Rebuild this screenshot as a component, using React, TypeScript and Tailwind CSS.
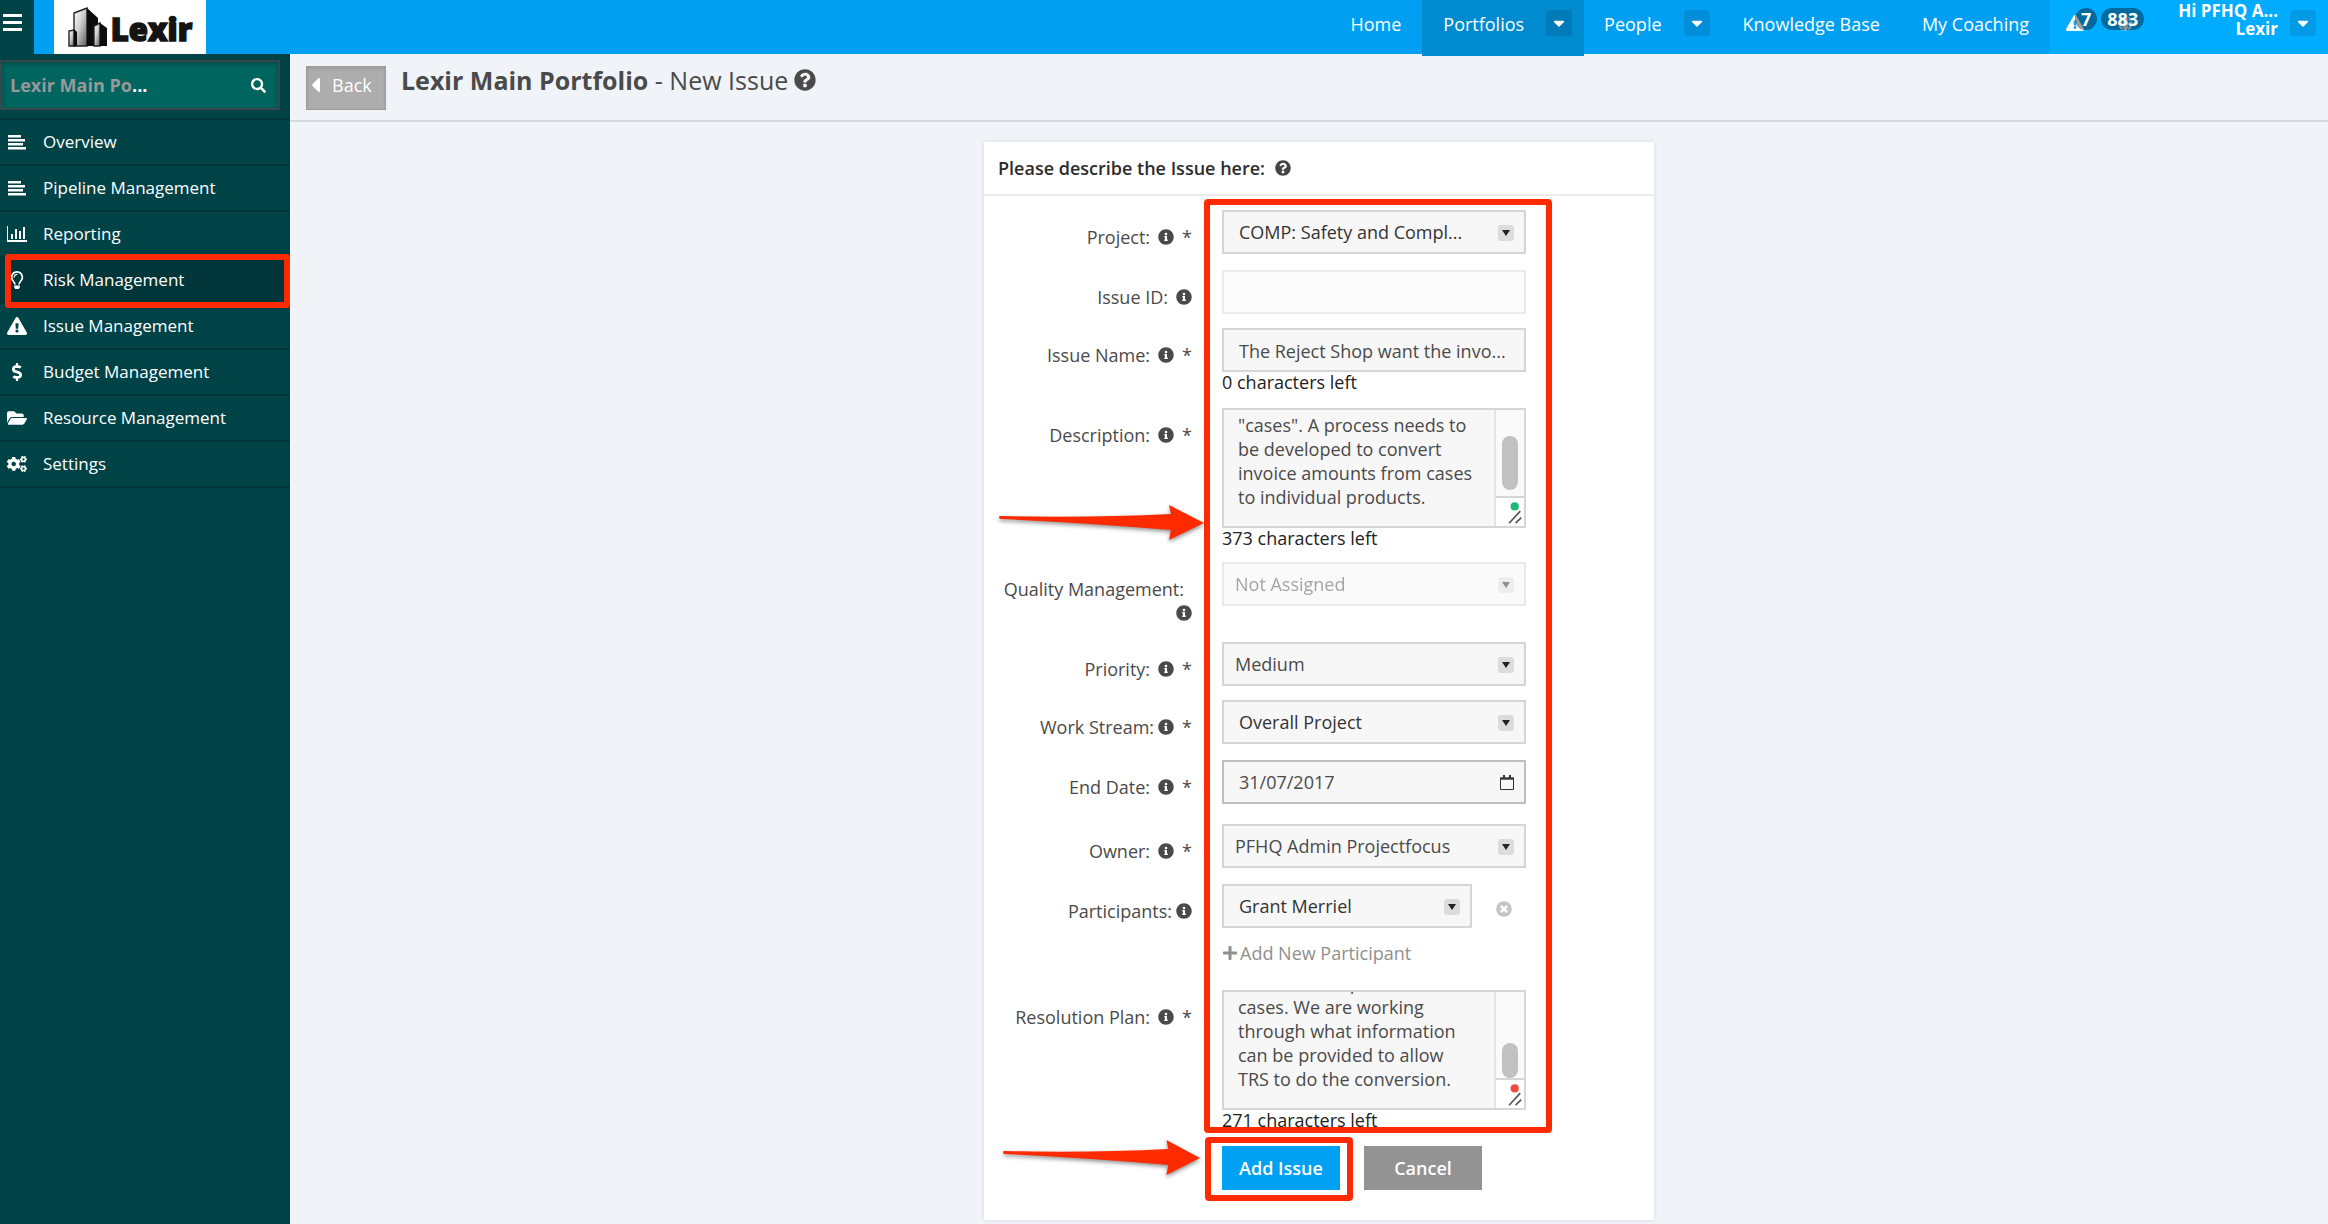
import React, { useEffect, useRef, useState } from 'react';
import type { IconType } from 'react-icons';
import {
  FaCaretDown,
  FaCaretLeft,
  FaCogs,
  FaDollarSign,
  FaExclamationTriangle,
  FaFolderOpen,
  FaGlobe,
  FaInfoCircle,
  FaPlus,
  FaQuestionCircle,
  FaRegLightbulb,
  FaSearch,
  FaTimesCircle,
} from 'react-icons/fa';

const LinesIcon = ({ className }: { className?: string }) => (
  <svg viewBox="0 0 20 16" className={className} fill="currentColor" aria-hidden="true">
    <path d="M1 1h13v2.6H1zM1 5h17v2.6H1zM1 9h15v2.6H1zM1 13h18v2.4H1z" />
  </svg>
);

const BarChartIcon = ({ className }: { className?: string }) => (
  <svg viewBox="0 0 20 16" className={className} fill="currentColor" aria-hidden="true">
    <path d="M0 0h1v14h19v2H0zM4 8h2v5H4zM8 3h2v10H8zM12 5h2v8h-2zM16 1h2v12h-2z" />
  </svg>
);

const menu: { name: string; icon: IconType | typeof LinesIcon; active?: boolean }[] = [
  { name: 'Overview', icon: LinesIcon },
  { name: 'Pipeline Management', icon: LinesIcon },
  { name: 'Reporting', icon: BarChartIcon },
  { name: 'Risk Management', icon: FaRegLightbulb, active: true },
  { name: 'Issue Management', icon: FaExclamationTriangle },
  { name: 'Budget Management', icon: FaDollarSign },
  { name: 'Resource Management', icon: FaFolderOpen },
  { name: 'Settings', icon: FaCogs },
];

function Logo() {
  return (
    <a href="#" aria-label="Lexir" className="ml-5 flex h-[54px] w-[152px] items-center justify-center gap-1 bg-white text-[#141414]">
      <svg viewBox="0 0 39 40" className="h-10 w-[39px]" aria-hidden="true">
        <defs>
          <linearGradient id="steel" x1="0" y1="0" x2="1" y2="1">
            <stop offset="0" stopColor="#ffffff" />
            <stop offset="0.45" stopColor="#d0d0d0" />
            <stop offset="1" stopColor="#5a5a5a" />
          </linearGradient>
        </defs>
        <path d="M6 6 19 1v38H6z" fill="url(#steel)" stroke="#222" strokeWidth="1.4" />
        <path d="M19 1 30 11v28H19z" fill="#0c0c0c" />
        <path d="M1 24l5-1v16H1z" fill="url(#steel)" stroke="#222" strokeWidth="1.4" />
        <path d="M6 22l3 3v14H6z" fill="#0c0c0c" />
        <path d="M26 19l6-3v23h-6z" fill="url(#steel)" stroke="#222" strokeWidth="1.4" />
        <path d="M32 16l7 5v18h-7z" fill="#0c0c0c" />
      </svg>
      <span className="pt-1 text-[31px] leading-8 font-extrabold [-webkit-text-stroke:1.5px_#141414]">Lexir</span>
    </a>
  );
}

function NavCaret({ label, className = '' }: { label: string; className?: string }) {
  return (
    <button type="button" aria-label={label} className={`flex size-[26px] items-center justify-center rounded bg-black/10 text-white ${className}`}>
      <FaCaretDown className="size-[18px]" />
    </button>
  );
}

function TopBar() {
  return (
    <header className="flex h-[54px] bg-[#009ff2] text-lg text-white">
      <button type="button" aria-label="Toggle menu" className="flex h-full w-[34px] items-start bg-[#004347] pt-3.5 pl-[3px]">
        <svg viewBox="0 0 19 17" className="h-[17px] w-[19px]" fill="currentColor" aria-hidden="true">
          <path d="M0 0h19v3H0zM0 7h19v3H0zM0 14h19v3H0z" />
        </svg>
      </button>
      <Logo />
      <nav className="ml-auto flex items-start font-medium">
        <a href="#" className="px-[21px] py-3 leading-6">Home</a>
        <div className="flex h-14 items-start bg-[#008acf]">
          <a href="#" className="py-3 pr-[22px] pl-[21px] leading-6">Portfolios</a>
          <NavCaret label="Portfolios menu" className="mt-2.5 mr-3" />
        </div>
        <div className="flex items-start">
          <a href="#" className="py-3 pr-[22px] pl-5 leading-6">People</a>
          <NavCaret label="People menu" className="mt-2.5 mr-3" />
        </div>
        <a href="#" className="px-[21px] py-3 leading-6">Knowledge Base</a>
        <a href="#" className="px-[21px] py-3 leading-6">My Coaching</a>
      </nav>
      <div className="flex w-[278px] items-start justify-between bg-[#00acff] pr-3 pl-4">
        <div className="flex gap-1 pt-2 font-bold">
          <a href="#" className="relative flex h-[22px] pl-[9px]">
            <FaExclamationTriangle className="absolute top-1.5 left-0 size-[18px]" />
            <span className="relative overflow-hidden rounded-full bg-[#006a9e] px-1.5 leading-[22px]">
              <FaExclamationTriangle className="absolute top-1.5 -left-[9px] size-[18px] text-[#a09c98]" />
              <span className="relative">7</span>
            </span>
          </a>
          <a href="#" className="relative flex h-[22px]">
            <FaGlobe className="absolute top-2 left-[17px] size-[15px] text-[#d8e6ee]" />
            <span className="relative overflow-hidden rounded-full bg-[#006a9e] px-1.5 leading-[22px]">
              <FaGlobe className="absolute top-2 left-[17px] size-[15px] text-[#8f9499]" />
              <span className="relative">883</span>
            </span>
          </a>
        </div>
        <div className="flex items-start gap-3">
          <div className="pt-0.5 text-right text-[17px] leading-[18px] font-bold">
            <p>Hi PFHQ A...</p>
            <p>Lexir</p>
          </div>
          <NavCaret label="Account menu" className="mt-2.5" />
        </div>
      </div>
    </header>
  );
}

function Sidebar() {
  return (
    <aside className="w-[290px] shrink-0 bg-[#004347] pt-1.5 text-white">
      <form className="mb-2 flex h-[50px] w-[280px] items-center border-2 border-[#37474b] bg-[#00645f] pr-3 pl-2 text-lg font-bold shadow-[inset_0_2px_4px_rgba(0,0,0,0.25)]">
        <input aria-label="Search portfolio" placeholder="Lexir Main Po" className="w-[122px] bg-transparent outline-none placeholder:text-[#999999]" />
        <span>...</span>
        <button type="submit" aria-label="Search" className="ml-auto">
          <FaSearch className="size-[15px]" />
        </button>
      </form>
      <ul className="border-t-2 border-[#00363a]">
        {menu.map((item) => (
          <li key={item.name} className={`relative border-b-2 border-[#00363a] ${item.active ? 'bg-[#00363a]' : ''}`}>
            <a href="#" className="flex h-11 items-center pb-px text-[17px]">
              <span className="mr-[15px] ml-1.5 flex w-[22px] justify-center">
                <item.icon className="h-[18px] w-5" />
              </span>
              {item.name}
            </a>
            {item.active && <div className="pointer-events-none absolute -top-1 right-0 -bottom-1.5 left-[5px] rounded-[3px] border-6 border-[#ff2a00]" />}
          </li>
        ))}
      </ul>
    </aside>
  );
}

function Row({ label, id, required, wide, className, children }: {
  label: string;
  id: string;
  required?: boolean;
  wide?: boolean;
  className: string;
  children: React.ReactNode;
}) {
  return (
    <div className={`flex items-start gap-[30px] pl-2 ${className}`}>
      <label htmlFor={id} className="flex w-[200px] flex-wrap items-center justify-end pt-[15px] leading-6">
        <span className={wide ? 'mr-2' : 'mr-1'}>{label}:</span>
        <FaInfoCircle className="my-1 size-4" />
        {required && <span className="ml-2">*</span>}
      </label>
      {children}
    </div>
  );
}

function Dropdown({ id, value, disabled, inset, className = 'w-[304px]' }: {
  id: string;
  value: string;
  disabled?: boolean;
  inset?: boolean;
  className?: string;
}) {
  return (
    <div className={`relative ${className} ${disabled ? 'opacity-50' : ''}`}>
      <select id={id} disabled={disabled} className={`h-11 w-full appearance-none border-2 border-[#d6d6d6] bg-[#f7f7f7] pr-10 ${inset ? 'pl-[15px] text-[#333]' : 'pl-[11px]'}`}>
        <option>{value}</option>
      </select>
      <span className="pointer-events-none absolute top-[15px] right-3 flex size-4 items-center justify-center rounded-[3px] bg-[#dcdcdc]">
        <svg viewBox="0 0 8 6" className="h-1.5 w-2" fill="#222" aria-hidden="true">
          <path d="M0 0h8L4 6z" />
        </svg>
      </span>
    </div>
  );
}

function TextBox({ id, text, left, dot, thumb }: { id: string; text: string; left: string; dot: string; thumb: string }) {
  const ref = useRef<HTMLTextAreaElement>(null);
  const [value, setValue] = useState(text);

  useEffect(() => {
    if (ref.current) ref.current.scrollTop = ref.current.scrollHeight;
  }, []);

  return (
    <div className="w-[304px]">
      <div className="relative flex h-[120px] border-2 border-[#d6d6d6] bg-[#f7f7f7]">
        <textarea
          id={id}
          ref={ref}
          value={value}
          onChange={(e) => setValue(e.target.value)}
          className="w-[270px] resize-none bg-transparent pt-1 pr-[18px] pb-[17px] pl-3.5 leading-6 outline-none [scrollbar-width:none]"
        />
        <div className="flex w-[30px] flex-col border-l-2 border-[#e4e4e4]">
          <div className="relative flex-1 bg-[#fafafa]">
            <div className={`absolute left-1.5 w-4 rounded-full bg-[#c1c1c1] ${thumb}`} />
          </div>
          <svg viewBox="0 0 28 30" className="h-[30px] w-7 border-t-2 border-[#d6d6d6] bg-white" aria-hidden="true">
            <circle cx="19" cy="9" r="4.4" className={dot} />
            <path d="M13 27 25 14M20 27l6-6" stroke="#555" strokeWidth="1.8" />
          </svg>
        </div>
      </div>
      <p className="leading-5 text-[#222]">{left}</p>
    </div>
  );
}

function Arrow({ className }: { className: string }) {
  return (
    <svg viewBox="0 0 205 36" className={`pointer-events-none absolute h-9 drop-shadow-[0_2px_2px_rgba(0,0,0,0.45)] ${className}`} fill="#ff2a00" preserveAspectRatio="none" aria-hidden="true">
      <path d="M1 11Q90 13 172 9L170 0 205 18 170 35 172 25Q90 18 1 14Q-1 12 1 11z" />
    </svg>
  );
}

function IssueForm() {
  return (
    <form className="relative mx-auto w-[670px] bg-white pb-[30px] text-lg text-[#4a4a4a] shadow-[0_0_4px_rgba(0,0,0,0.12)]" onSubmit={(e) => e.preventDefault()}>
      <h2 className="mb-3.5 flex h-[54px] items-center gap-2.5 border-b-2 border-[#ececec] pl-3.5 font-semibold text-[#2c2c2c]">
        Please describe the Issue here:
        <FaQuestionCircle className="size-4 text-[#444]" />
      </h2>

      <Row label="Project" id="project" required wide className="mb-4">
        <Dropdown id="project" value="COMP: Safety and Compl..." inset />
      </Row>
      <Row label="Issue ID" id="issue-id" wide className="mb-3.5">
        <input id="issue-id" disabled className="h-11 w-[304px] border-2 border-[#ebebeb] bg-[#fbfbfb]" />
      </Row>
      <Row label="Issue Name" id="issue-name" required wide className="mb-4">
        <div className="w-[304px]">
          <input id="issue-name" defaultValue="The Reject Shop want the invo..." className="block h-11 w-full border-2 border-[#d6d6d6] bg-[#f7f7f7] pt-0.5 pl-[15px]" />
          <p className="leading-5 text-[#222]">0 characters left</p>
        </div>
      </Row>
      <Row label="Description" id="description" required wide className="mb-3.5">
        <TextBox id="description" text={'"cases". A process needs to be developed to convert invoice amounts from cases to individual products.'} left="373 characters left" dot="fill-[#1cb878]" thumb="top-[26px] h-[54px]" />
      </Row>
      <Row label="Quality Management" id="quality" wide className="mb-[17px]">
        <Dropdown id="quality" value="Not Assigned" disabled />
      </Row>
      <Row label="Priority" id="priority" required wide className="mb-3.5">
        <Dropdown id="priority" value="Medium" />
      </Row>
      <Row label="Work Stream" id="work-stream" required className="mb-4">
        <Dropdown id="work-stream" value="Overall Project" inset />
      </Row>
      <Row label="End Date" id="end-date" required wide className="mb-5">
        <div className="relative w-[304px]">
          <input id="end-date" defaultValue="31/07/2017" className="block h-11 w-full border-2 border-[#bfbfbf] bg-[#f7f7f7] pl-[15px]" />
          <svg viewBox="0 0 14 15" className="pointer-events-none absolute top-[15px] right-3 h-[15px] w-3.5" fill="none" stroke="#333" aria-hidden="true">
            <path d="M.5 3v11.5h13V3" />
            <path d="M0 3.5h14" strokeWidth="2.4" />
            <path d="M4 0v4M10 0v4" strokeWidth="2" />
          </svg>
        </div>
      </Row>
      <Row label="Owner" id="owner" required wide className="mb-4">
        <Dropdown id="owner" value="PFHQ Admin Projectfocus" />
      </Row>
      <Row label="Participants" id="participants" className="mb-[25px]">
        <div>
          <div className="mb-[13px] flex items-center gap-6">
            <Dropdown id="participants" value="Grant Merriel" inset className="w-[250px]" />
            <button type="button" aria-label="Remove participant">
              <FaTimesCircle className="mt-1.5 size-4 text-[#c4c4c4]" />
            </button>
          </div>
          <button type="button" className="flex items-center gap-0.5 leading-6 text-[#8f8f8f]">
            <FaPlus className="size-4" />
            Add New Participant
          </button>
        </div>
      </Row>
      <Row label="Resolution Plan" id="resolution" required wide className="mb-4">
        <TextBox id="resolution" text="needs to be split into the cases. We are working through what information can be provided to allow TRS to do the conversion." left="271 characters left" dot="fill-[#f04c3e]" thumb="bottom-0 h-[35px]" />
      </Row>

      <div className="flex gap-6 pl-[238px] font-semibold text-white">
        <button type="submit" className="h-11 w-[118px] bg-[#00a0f3]">Add Issue</button>
        <button type="button" className="h-11 w-[118px] bg-[#939393]">Cancel</button>
      </div>

      <div className="pointer-events-none absolute top-[57px] left-[220px] h-[934px] w-[348px] rounded border-6 border-[#ff2a00]" />
      <div className="pointer-events-none absolute top-[995px] left-[221px] h-16 w-[148px] rounded border-6 border-[#ff2a00]" />
      <Arrow className="top-[363px] left-[15px] w-[205px]" />
      <Arrow className="top-[998px] left-[19px] w-[197px]" />
    </form>
  );
}

export default function App() {
  return (
    <div className="flex min-h-screen flex-col bg-[#f0f4f8] font-['Open_Sans',sans-serif]">
      <TopBar />
      <div className="flex flex-1">
        <Sidebar />
        <main className="min-w-0 flex-1">
          <div className="flex h-[68px] items-start gap-[15px] border-b-2 border-[#d2dae2] pt-3 pl-4">
            <button type="button" className="flex h-11 w-20 items-center gap-3 border border-[#9c9c9c] bg-[#adadad] pb-1.5 pl-1 text-lg font-medium text-white shadow-[inset_0_2px_3px_rgba(0,0,0,0.1)]">
              <FaCaretLeft className="h-6 w-[9px]" />
              Back
            </button>
            <h1 className="flex items-center gap-1.5 text-[25px] leading-7 text-[#4a4a4a]">
              <span>
                <b>Lexir Main Portfolio</b> - New Issue
              </span>
              <FaQuestionCircle className="size-[22px]" />
            </h1>
          </div>
          <div className="pt-5 pl-5">
            <IssueForm />
          </div>
        </main>
      </div>
    </div>
  );
}
